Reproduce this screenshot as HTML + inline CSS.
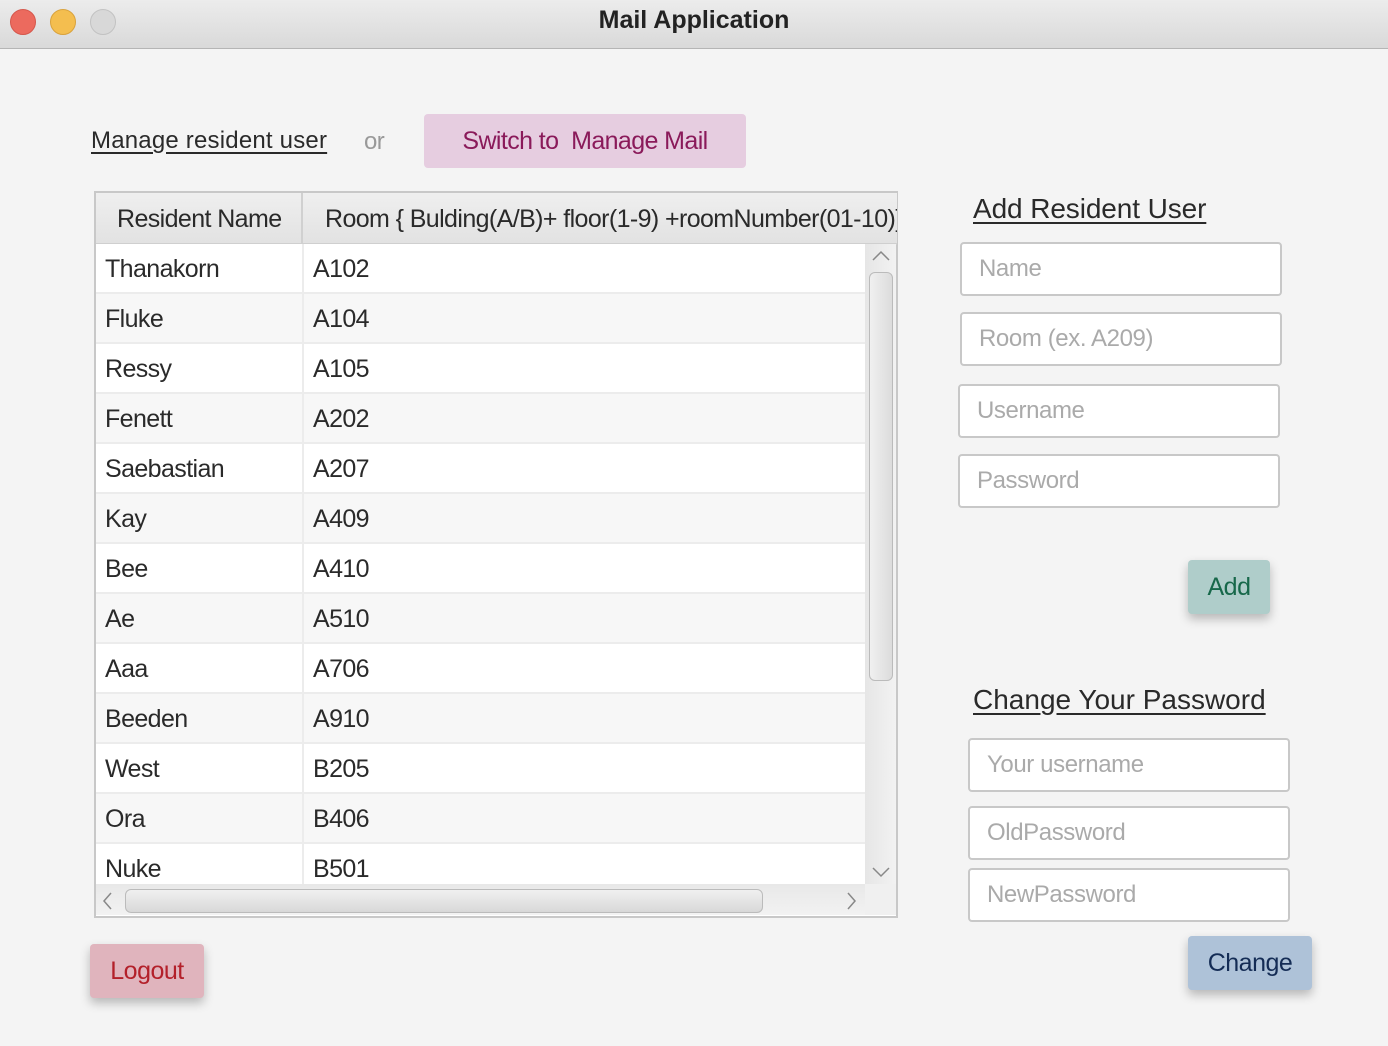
<!DOCTYPE html>
<html><head><style>
body{margin:0;width:1388px;height:1046px;background:#f4f4f4;font-family:"Liberation Sans",sans-serif;position:relative;overflow:hidden;color:#2a2a2a}
.a{position:absolute}
.tb{left:0;top:0;width:1388px;height:48px;background:linear-gradient(#ececec,#d9d9d9);border-bottom:1px solid #b5b5b5}
.dot{position:absolute;top:9px;width:24px;height:24px;border-radius:50%}
.t{font-size:24px;letter-spacing:-0.6px;white-space:nowrap}
.inp{position:absolute;background:#fff;border:2px solid #c8c8c8;border-radius:4px;font-size:24px;color:#aaa;letter-spacing:-0.4px;box-sizing:border-box;padding-left:17px;line-height:50px;height:54px}
.btn{position:absolute;border-radius:4px;font-size:25px;letter-spacing:-0.5px;text-align:center;box-shadow:0 5px 10px rgba(0,0,0,.25)}
.row{position:absolute;left:96px;width:769px;height:50px;border-bottom:2px solid #ececec;box-sizing:border-box}
.row span{position:absolute;top:11px;font-size:25px;letter-spacing:-0.6px}
</style></head><body>
<div class="a tb"></div>
<div class="dot" style="left:10px;background:#ec6a5e;border:1px solid #d5574c"></div>
<div class="dot" style="left:50px;background:#f4be4f;border:1px solid #d9a23c"></div>
<div class="dot" style="left:90px;background:#d8d8d8;border:1px solid #c2c2c2"></div>
<div class="a" style="left:0;width:1388px;top:6px;text-align:center;font-size:25px;font-weight:bold;color:#222">Mail Application</div>

<div class="a t" style="left:91px;top:127px;letter-spacing:0.2px;text-decoration:underline;text-underline-offset:4px">Manage resident user</div>
<div class="a t" style="left:364px;top:128px;color:#999">or</div>
<div class="a" style="left:424px;top:114px;width:322px;height:54px;background:#e6cde0;border-radius:4px;color:#8a1a5a;font-size:25px;letter-spacing:-0.6px;text-align:center;line-height:54px">Switch to&nbsp; Manage Mail</div>

<div class="a" style="left:94px;top:191px;width:800px;height:723px;border:2px solid #c8c8c8;background:#fff;overflow:hidden">
</div>
<div class="a" style="left:96px;top:193px;width:801px;height:50px;background:linear-gradient(#efefef,#e2e2e2);border-bottom:2px solid #cfcfcf;overflow:hidden">
 <div class="a" style="left:205px;top:0;width:2px;height:50px;background:#d0d0d0"></div>
 <div class="a t" style="left:21px;top:12px;font-size:25px">Resident Name</div>
 <div class="a t" style="left:229px;top:12px;font-size:25px">Room { Bulding(A/B)+ floor(1-9) +roomNumber(01-10)}</div>
</div>
<div class="row" style="top:244px;background:#fff"><span style="left:9px">Thanakorn</span><span style="left:217px">A102</span></div>
<div class="row" style="top:294px;background:#f7f7f7"><span style="left:9px">Fluke</span><span style="left:217px">A104</span></div>
<div class="row" style="top:344px;background:#fff"><span style="left:9px">Ressy</span><span style="left:217px">A105</span></div>
<div class="row" style="top:394px;background:#f7f7f7"><span style="left:9px">Fenett</span><span style="left:217px">A202</span></div>
<div class="row" style="top:444px;background:#fff"><span style="left:9px">Saebastian</span><span style="left:217px">A207</span></div>
<div class="row" style="top:494px;background:#f7f7f7"><span style="left:9px">Kay</span><span style="left:217px">A409</span></div>
<div class="row" style="top:544px;background:#fff"><span style="left:9px">Bee</span><span style="left:217px">A410</span></div>
<div class="row" style="top:594px;background:#f7f7f7"><span style="left:9px">Ae</span><span style="left:217px">A510</span></div>
<div class="row" style="top:644px;background:#fff"><span style="left:9px">Aaa</span><span style="left:217px">A706</span></div>
<div class="row" style="top:694px;background:#f7f7f7"><span style="left:9px">Beeden</span><span style="left:217px">A910</span></div>
<div class="row" style="top:744px;background:#fff"><span style="left:9px">West</span><span style="left:217px">B205</span></div>
<div class="row" style="top:794px;background:#f7f7f7"><span style="left:9px">Ora</span><span style="left:217px">B406</span></div>
<div class="row" style="top:844px;height:40px;background:#fff;border:none"><span style="left:9px">Nuke</span><span style="left:217px">B501</span></div>
<div class="a" style="left:302px;top:244px;width:2px;height:640px;background:#ececec"></div>
<div class="a" style="left:865px;top:244px;width:31px;height:640px;background:linear-gradient(90deg,#e6e6e6,#f2f2f2)"></div>
<div class="a" style="left:869px;top:272px;width:22px;height:407px;border:1px solid #bbb;border-radius:6px;background:linear-gradient(90deg,#f0f0f0,#dcdcdc)"></div>
<svg class="a" style="left:870px;top:248px" width="22" height="16"><path d="M3 12 L11 4 L19 12" fill="none" stroke="#888" stroke-width="1.5"/></svg>
<svg class="a" style="left:870px;top:864px" width="22" height="16"><path d="M3 4 L11 12 L19 4" fill="none" stroke="#888" stroke-width="1.5"/></svg>
<div class="a" style="left:96px;top:884px;width:769px;height:31px;background:linear-gradient(#e8e8e8,#f2f2f2)"></div>
<div class="a" style="left:865px;top:884px;width:31px;height:31px;background:#f0f0f0"></div>
<div class="a" style="left:125px;top:889px;width:636px;height:22px;border:1px solid #bbb;border-radius:6px;background:linear-gradient(#f0f0f0,#d8d8d8)"></div>
<svg class="a" style="left:99px;top:890px" width="16" height="22"><path d="M12 3 L5 11 L12 19" fill="none" stroke="#888" stroke-width="1.5"/></svg>
<svg class="a" style="left:844px;top:890px" width="16" height="22"><path d="M4 3 L11 11 L4 19" fill="none" stroke="#888" stroke-width="1.5"/></svg>

<div class="btn" style="left:90px;top:944px;width:114px;height:54px;line-height:54px;background:#e0b4bd;color:#b3202a">Logout</div>

<div class="a t" style="left:973px;top:193px;font-size:28px;text-decoration:underline;text-underline-offset:4px;letter-spacing:-0.1px">Add Resident User</div>
<div class="inp" style="left:960px;top:242px;width:322px">Name</div>
<div class="inp" style="left:960px;top:312px;width:322px">Room (ex. A209)</div>
<div class="inp" style="left:958px;top:384px;width:322px">Username</div>
<div class="inp" style="left:958px;top:454px;width:322px">Password</div>
<div class="btn" style="left:1188px;top:560px;width:82px;height:54px;line-height:54px;background:#afcdca;color:#17684a">Add</div>

<div class="a t" style="left:973px;top:684px;font-size:28px;text-decoration:underline;text-underline-offset:4px;letter-spacing:0px">Change Your Password</div>
<div class="inp" style="left:968px;top:738px;width:322px">Your username</div>
<div class="inp" style="left:968px;top:806px;width:322px">OldPassword</div>
<div class="inp" style="left:968px;top:868px;width:322px">NewPassword</div>
<div class="btn" style="left:1188px;top:936px;width:124px;height:54px;line-height:54px;background:#aec2d8;color:#142c55">Change</div>
</body></html>
